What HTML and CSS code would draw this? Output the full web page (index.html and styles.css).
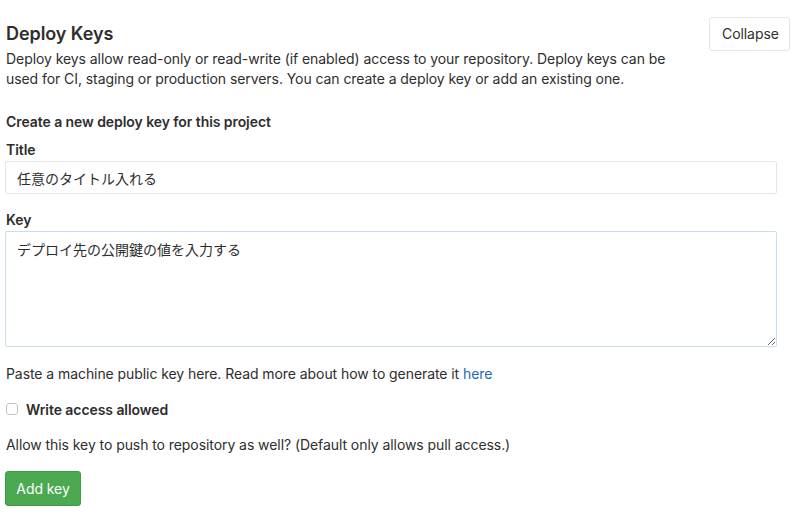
FILE: index.html
```html
<!DOCTYPE html>
<html lang="ja">
<head>
<meta charset="utf-8">
<title>Deploy Keys</title>
<link rel="stylesheet" href="styles.css">
</head>
<body>
<section class="settings">
  <div class="settings-header">
    <div class="header-text">
      <h4 class="title">Deploy Keys</h4>
    </div>
    <button class="btn btn-default" type="button">Collapse</button>
  </div>
  <p class="intro">Deploy keys allow read-only or read-write (if enabled) access to your repository. Deploy keys can be used for CI, staging or production servers. You can create a deploy key or add an existing one.</p>
  <form class="deploy-form">
    <h5 class="form-heading">Create a new deploy key for this project</h5>
    <label class="label" for="title">Title</label>
    <input class="input" id="title" type="text" value="任意のタイトル入れる">
    <label class="label label-key" for="key">Key</label>
    <textarea class="input textarea" id="key">デプロイ先の公開鍵の値を入力する</textarea>
    <p class="help">Paste a machine public key here. Read more about how to generate it <a href="#">here</a></p>
    <label class="checkbox-row">
      <span class="checkbox"></span>
      <strong>Write access allowed</strong>
    </label>
    <p class="help help-allow">Allow this key to push to repository as well? (Default only allows pull access.)</p>
    <button class="btn btn-create" type="button">Add key</button>
  </form>
</section>
</body>
</html>
```
FILE: styles.css
```css
* { box-sizing: border-box; }
html, body { margin: 0; padding: 0; background: #fff; }
body {
  font-family: "Inter", "Noto Sans CJK JP", sans-serif;
  font-size: 14px;
  letter-spacing: -0.07px;
  color: #2e2e2e;
  width: 800px;
  height: 518px;
  overflow: hidden;
}
.settings { padding: 17px 10px 0 5px; }
.settings-header {
  display: flex;
  justify-content: space-between;
  align-items: center;
  height: 34px;
}
.title {
  margin: 0;
  padding-left: 1px;
  font-size: 18px;
  font-weight: 600;
  line-height: 20px;
  color: #2e2e2e;
}
.btn {
  font-family: inherit;
  font-size: 14px;
  letter-spacing: inherit;
  line-height: 20px;
  border-radius: 3px;
  padding: 6px 12px;
  height: 34px;
  cursor: pointer;
}
.btn-default {
  width: 81px;
  background: #fff;
  border: 1px solid #e5e5e5;
  color: #2e2e2e;
}
.intro {
  margin: -2px 0 0 1px;
  line-height: 20px;
  width: 680px;
}
.deploy-form {
  margin-right: 13px;
  display: flex;
  flex-direction: column;
  align-items: flex-start;
}
.form-heading {
  margin: 23px 0 0 1px;
  font-size: 14px;
  font-weight: 600;
  line-height: 20px;
}
.label {
  margin: 8px 0 1px 1px;
  font-weight: 600;
  line-height: 20px;
}
.label-key { margin-top: 16px; }
.input {
  width: 100%;
  height: 33px;
  border: 1px solid #e5e5e5;
  border-radius: 2px;
  padding: 6px 11px;
  font-family: "Inter", "Noto Sans CJK JP", sans-serif;
  font-size: 14px;
  color: #2e2e2e;
  outline: none;
  background: #fff;
}
.textarea {
  height: 116px;
  resize: vertical;
  border-color: #c9dcf2;
  padding: 8px 11px;
  line-height: 20px;
}
.help {
  margin: 17px 0 0 1px;
  line-height: 20px;
}
.help a { color: #1b69b6; text-decoration: none; }
.checkbox-row {
  margin-top: 15px;
  margin-left: 1px;
  display: flex;
  align-items: center;
  height: 20px;
  font-weight: 600;
}
.checkbox-row strong { font-weight: 600; }
.checkbox {
  width: 12px;
  height: 12px;
  border: 1px solid #c2c2c2;
  border-radius: 3px;
  background: #fff;
  margin-right: 8px;
}
.help-allow { margin-top: 16px; }
.btn-create {
  margin-top: 16px;
  width: 76px;
  height: 35px;
  background: #4ba952;
  border: 1px solid #3f9a46;
  color: #fff;
  padding: 6px 10px;
}
```
